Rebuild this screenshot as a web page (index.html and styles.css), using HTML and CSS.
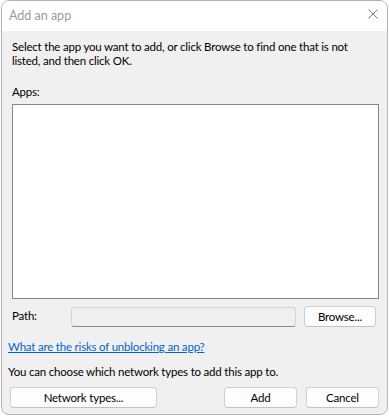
FILE: index.html
```html
<!DOCTYPE html>
<html lang="en">
<head>
  <meta charset="UTF-8">
  <title>Add an app</title>
  <link rel="stylesheet" href="styles.css">
</head>
<body>

<div class="window">
  <!-- Title bar -->
  <div class="titlebar">
    <span class="title">Add an app</span>
    <svg class="close" width="10" height="10" viewBox="0 0 10 10">
      <path d="M0.5 0.5 L9.5 9.5 M9.5 0.5 L0.5 9.5" stroke="#7a7a7a" stroke-width="1" fill="none"/>
    </svg>
  </div>

  <div class="content">
    <p class="intro">Select the app you want to add, or click Browse to find one that is not listed, and then click OK.</p>

    <label class="apps-label">Apps:</label>
    <div class="app-list"></div>

    <div class="path-row">
      <span class="path-label">Path:</span>
      <div class="path-field"></div>
      <button class="btn browse">Browse...</button>
    </div>

    <a class="risk-link" href="#">What are the risks of unblocking an app?</a>

    <p class="network-note">You can choose which network types to add this app to.</p>

    <div class="footer">
      <button class="btn network">Network types...</button>
      <div class="footer-right">
        <button class="btn action">Add</button>
        <button class="btn action">Cancel</button>
      </div>
    </div>
  </div>
</div>

</body>
</html>
```

FILE: styles.css
```css
* {
    margin: 0;
    padding: 0;
    box-sizing: border-box;
}

body {
    font-family: 'Lato', sans-serif;
    font-size: 11.5px;
    letter-spacing: -0.2px;
    color: #000;
    background-color: #ffffff;
}

.window {
    width: 387px;
    height: 415px;
    margin-left: 1px;
    border: 1px solid #b4b4b4;
    border-radius: 8px;
    overflow: hidden;
    background-color: #f0f0f0;
    display: flex;
    flex-direction: column;
}

/* Title bar */
.titlebar {
    height: 30px;
    background-color: #ffffff;
    display: flex;
    align-items: center;
    justify-content: space-between;
    padding: 0 9px 0 7px;
}

.title {
    color: #9b9b9b;
    font-size: 12.5px;
    letter-spacing: 0;
    margin-top: -1px;
}

.close {
    margin-top: -4px;
}

/* Content */
.content {
    padding: 9px 8px 0 10px;
    display: flex;
    flex-direction: column;
}

.intro {
    max-width: 340px;
    line-height: 14px;
    margin-bottom: 17px;
}

.apps-label {
    line-height: 14px;
    margin-bottom: 5px;
}

.app-list {
    width: 367px;
    height: 195px;
    background-color: #ffffff;
    border: 1px solid #828790;
}

.path-row {
    display: flex;
    align-items: center;
    margin-top: 8px;
}

.path-label {
    width: 59px;
    margin-top: -3px;
}

.path-field {
    width: 225px;
    height: 20px;
    background-color: #efefef;
    border: 1px solid #d5d5d5;
    border-bottom-color: #8a8a8a;
    border-radius: 3px;
}

.btn {
    font-family: 'Lato', sans-serif;
    font-size: 11.5px;
    letter-spacing: -0.2px;
    color: #000;
    height: 21px;
    background-color: #fdfdfd;
    border: 1px solid #d0d0d0;
    border-bottom-color: #c2c2c2;
    border-radius: 4px;
}

.browse {
    width: 72px;
    margin-left: 8px;
    margin-top: -1px;
}

.risk-link {
    color: #0066cc;
    text-decoration: underline;
    margin-left: -4px;
    margin-top: 13px;
    line-height: 14px;
    align-self: flex-start;
}

.network-note {
    margin-left: -4px;
    margin-top: 11px;
    line-height: 14px;
}

.footer {
    display: flex;
    justify-content: space-between;
    margin-top: 8px;
    margin-left: -2px;
}

.network {
    width: 147px;
}

.footer-right {
    display: flex;
    gap: 9px;
}

.action {
    width: 73px;
}
```
